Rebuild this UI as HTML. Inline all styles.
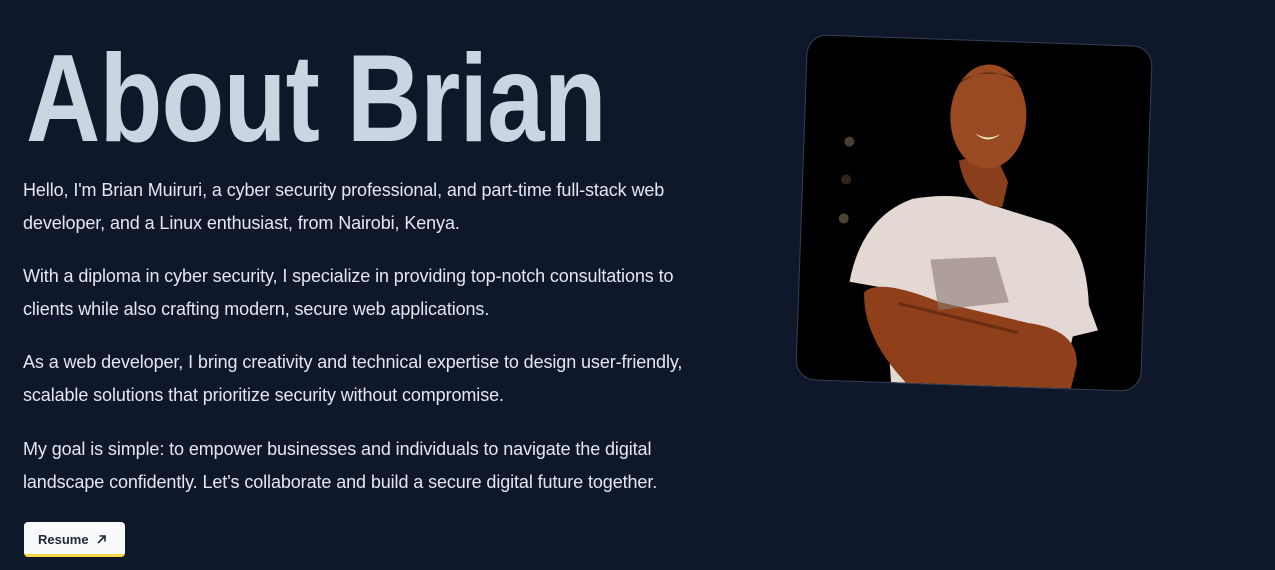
<!DOCTYPE html>
<html><head><style>
body{margin:0;width:1275px;height:570px;background:#0f172a;overflow:hidden;font-family:"Liberation Sans",sans-serif;position:relative}
h1{position:absolute;left:26px;top:24px;margin:0;font-size:124px;font-weight:bold;color:#cbd5e1;line-height:150px;white-space:nowrap;transform:scaleX(0.83);transform-origin:0 0;letter-spacing:-1px}
.t{position:absolute;left:23px;color:#e2e8f0;font-size:18px;line-height:33px;white-space:nowrap;letter-spacing:-0.1px}
.btn{position:absolute;left:24px;top:522px;width:101px;height:32px;background:#f8fafc;border-bottom:3px solid #fcd34d;border-radius:4px;font-size:13px;font-weight:bold;color:#1e293b;box-sizing:content-box}
.btn span{position:absolute;left:14px;top:10px}
.photo{position:absolute;left:801px;top:40px;width:344px;height:344px;transform:rotate(2deg);border-radius:20px;background:#000;border:1px solid #334155;overflow:hidden}
</style></head><body>
<h1>About Brian</h1>
<div class="t" style="top:174px">Hello, I'm Brian Muiruri, a cyber security professional, and part-time full-stack web<br>developer, and a Linux enthusiast, from Nairobi, Kenya.</div>
<div class="t" style="top:260px">With a diploma in cyber security, I specialize in providing top-notch consultations to<br>clients while also crafting modern, secure web applications.</div>
<div class="t" style="top:346px">As a web developer, I bring creativity and technical expertise to design user-friendly,<br>scalable solutions that prioritize security without compromise.</div>
<div class="t" style="top:433px">My goal is simple: to empower businesses and individuals to navigate the digital<br>landscape confidently. Let's collaborate and build a secure digital future together.</div>
<div class="btn"><span>Resume</span>
<svg style="position:absolute;left:72px;top:12px" width="11" height="11" viewBox="0 0 11 11"><path d="M2 9L9 2M3.5 2H9V7.5" stroke="#1e293b" stroke-width="1.6" fill="none"/></svg></div>
<div class="photo">
<svg width="344" height="344" viewBox="0 0 344 344">
<circle cx="45" cy="105" r="5" fill="#6b5a40" opacity=".7"/>
<circle cx="43" cy="143" r="5" fill="#4a3e2a" opacity=".6"/>
<circle cx="42" cy="182" r="5" fill="#6b6040" opacity=".7"/>
<path d="M110 160 Q160 150 195 165 L250 180 Q285 195 290 260 L300 285 L275 292 L265 344 L95 344 L85 250 L50 245 Q60 180 110 160Z" fill="#e4d8d4"/>
<path d="M155 120 Q165 165 200 165 L205 140 L190 110Z" fill="#8a3f1c"/>
<ellipse cx="183" cy="75" rx="38" ry="52" fill="#9a4a22"/>
<path d="M145 50 Q180 15 220 45 Q205 30 183 32 Q160 32 145 50Z" fill="#1a0d06"/>
<path d="M170 92 Q183 100 196 92 Q183 104 170 92Z" fill="#f3e6c8"/>
<path d="M65 255 Q80 240 140 262 L230 280 Q280 285 280 320 L275 344 L110 344 Q65 300 65 255Z" fill="#8f3f1a"/>
<path d="M100 265 L220 290" stroke="#6a2c10" stroke-width="3"/>
<path d="M130 220 L195 215 L210 260 L140 270Z" fill="#8c7a75" opacity=".6"/>
</svg></div>
</body></html>
